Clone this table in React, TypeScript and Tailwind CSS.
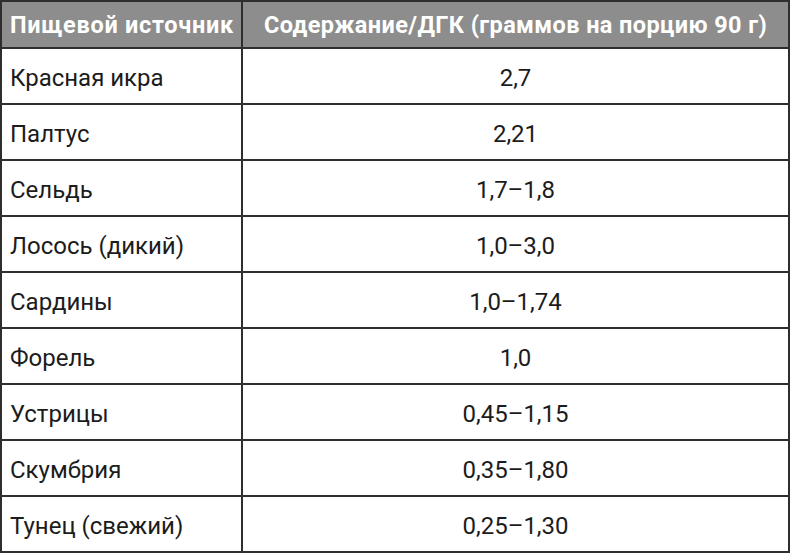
const rows: [string, string][] = [
  ['Красная икра', '2,7'],
  ['Палтус', '2,21'],
  ['Сельдь', '1,7–1,8'],
  ['Лосось (дикий)', '1,0–3,0'],
  ['Сардины', '1,0–1,74'],
  ['Форель', '1,0'],
  ['Устрицы', '0,45–1,15'],
  ['Скумбрия', '0,35–1,80'],
  ['Тунец (свежий)', '0,25–1,30'],
];

export default function App() {
  return (
    <div className="w-[790px] h-[553px] bg-white font-['Roboto',sans-serif] text-[#1c1c1c]">
      <div className="flex flex-col border-2 border-[#2e2e2e]">
        <div className="flex h-[45px] bg-[#8d8d8d] text-white font-bold text-[23.5px] tracking-[0.4px]">
          <div className="w-[241px] shrink-0 border-r-2 border-[#2e2e2e] flex items-center pl-[8px] pt-[2px] tracking-[0.7px]">
            Пищевой источник
          </div>
          <div className="flex-1 flex items-center justify-center pt-[2px]">
            Содержание/ДГК (граммов на порцию 90 г)
          </div>
        </div>
        {rows.map(([name, value]) => (
          <div key={name} className="flex h-[56px] border-t-2 border-[#2e2e2e] text-[24px]">
            <div className="w-[241px] shrink-0 border-r-2 border-[#2e2e2e] flex items-center pl-[8px] pt-[4px]">
              {name}
            </div>
            <div className="flex-1 flex items-center justify-center pt-[4px]">{value}</div>
          </div>
        ))}
      </div>
    </div>
  );
}
